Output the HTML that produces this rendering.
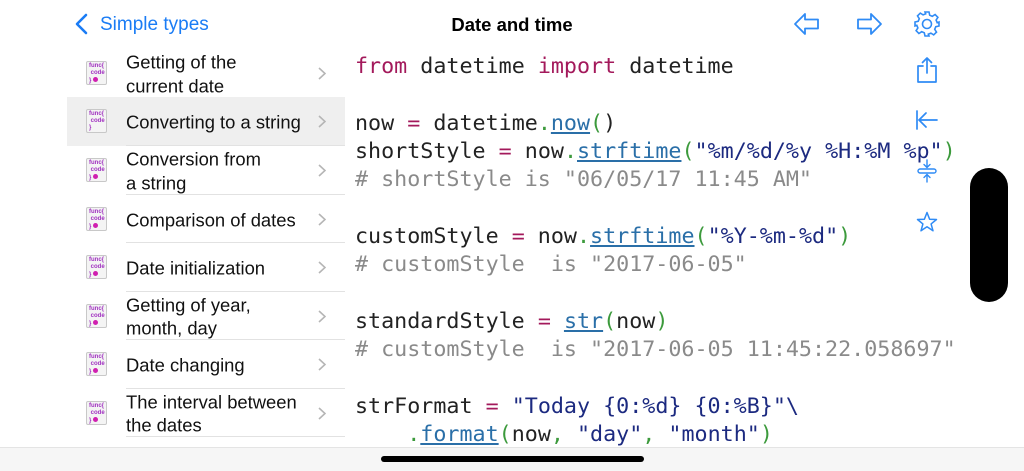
<!DOCTYPE html>
<html><head><meta charset="utf-8"><style>
*{margin:0;padding:0;box-sizing:border-box}
body{width:1024px;height:471px;overflow:hidden;background:#fff;position:relative;font-family:"Liberation Sans",sans-serif}
.abs{position:absolute}
.back{left:100px;top:14px;font-size:19px;color:#1a7cf5}
.title{left:0;width:1024px;top:14px;text-align:center;font-size:18.5px;font-weight:bold;color:#000}
.row{position:absolute;left:67px;width:278px;height:48.5px}
.row.sel{background:#efefef}
.row .t{position:absolute;left:59px;top:50%;transform:translateY(-50%);margin-top:1px;font-size:18.4px;line-height:23.5px;color:#111}
.row .sep{position:absolute;left:59px;right:0;bottom:0;height:1px;background:#e2e2e2}
.row .ch{position:absolute;left:251px;top:50%;margin-top:-6px}
.ic{position:absolute;left:19px;top:50%;margin-top:-12px;width:21px;height:24px;border:1px solid #c8c8c8;border-radius:2px;background:#f4f4f4;font-family:"Liberation Sans",sans-serif;font-size:6px;line-height:7px;color:#a030c0;padding:1px 0 0 2px;font-weight:bold}
.ic i{display:inline-block;width:5px;height:5px;border-radius:50%;background:#d020b0;margin-left:2px}
pre{position:absolute;left:355px;top:53px;font-family:"DejaVu Sans Mono",monospace;font-size:21.7px;line-height:28.3px;color:#222}
.k{color:#a3195b}.f{color:#2a6fa8;text-decoration:underline}.g{color:#3c9a3c}.s{color:#1c2a80}.c{color:#8a8a8a}
</style></head><body>
<svg class="abs" style="left:74px;top:13px" width="16" height="22"><path d="M12 2 L3 11 L12 20" fill="none" stroke="#1a7cf5" stroke-width="2.6" stroke-linecap="round" stroke-linejoin="round"/></svg>
<div class="abs back">Simple types</div>
<div class="abs title">Date and time</div>
<svg class="abs" style="left:793px;top:11px" width="28" height="26"><path d="M2 13 L12 3 V8.5 H25 V17.5 H12 V23 Z" fill="none" stroke="#2f8bf5" stroke-width="1.8" stroke-linejoin="round"/></svg>
<svg class="abs" style="left:855px;top:11px" width="28" height="26"><path d="M26 13 L16 3 V8.5 H3 V17.5 H16 V23 Z" fill="none" stroke="#2f8bf5" stroke-width="1.8" stroke-linejoin="round"/></svg>
<svg class="abs" style="left:913px;top:10px" width="28" height="28" viewBox="0 0 28 28"><g fill="none" stroke="#2f8bf5" stroke-width="1.6"><circle cx="14" cy="14" r="4.5"/><path d="M12 2h4l.7 3.2 2.6 1.1 2.8-1.8 2.8 2.8-1.8 2.8 1.1 2.6L26 12v4l-3.2.7-1.1 2.6 1.8 2.8-2.8 2.8-2.8-1.8-2.6 1.1L16 26h-4l-.7-3.2-2.6-1.1-2.8 1.8-2.8-2.8 1.8-2.8-1.1-2.6L2 16v-4l3.2-.7 1.1-2.6-1.8-2.8 2.8-2.8 2.8 1.8 2.6-1.1z"/></g></svg>
<svg class="abs" style="left:914px;top:56px" width="26" height="28"><g fill="none" stroke="#2f8bf5" stroke-width="1.7" stroke-linecap="round" stroke-linejoin="round"><path d="M9 10H4V26H22V10H17"/><path d="M13 17V2M8.5 6.5L13 2l4.5 4.5"/></g></svg>
<svg class="abs" style="left:914px;top:108px" width="26" height="24"><g fill="none" stroke="#2f8bf5" stroke-width="1.7" stroke-linecap="round"><path d="M3 3V21M5 12H23M12 5L5 12L12 19"/></g></svg>
<svg class="abs" style="left:915px;top:158px" width="26" height="26"><g fill="none" stroke="#2f8bf5" stroke-width="1.4" stroke-linecap="round"><path d="M12 2V9M9 6.5L12 9.5L15 6.5M12 24V17M9 19.5L12 16.5L15 19.5"/><rect x="3" y="11" width="18" height="4" rx="2"/></g></svg>
<svg class="abs" style="left:915px;top:210px" width="24" height="24"><path d="M12 2.5L14.6 9.2L21.5 9.5L16.1 13.9L18 20.8L12 16.8L6 20.8L7.9 13.9L2.5 9.5L9.4 9.2Z" fill="none" stroke="#2f8bf5" stroke-width="1.5" stroke-linejoin="round"/></svg>

<div class="row" style="top:49px"><div class="ic">func{<br>&nbsp;code<br>}<i></i></div><div class="t">Getting of the<br>current date</div><svg class="ch" width="8" height="13"><path d="M1 1L7 6.5L1 12" fill="none" stroke="#b5b5b5" stroke-width="1.6"/></svg></div>
<div class="row sel" style="top:97px"><div class="ic">func{<br>&nbsp;code<br>}</div><div class="t">Converting to a string</div><svg class="ch" width="8" height="13"><path d="M1 1L7 6.5L1 12" fill="none" stroke="#b5b5b5" stroke-width="1.6"/></svg></div>
<div class="row" style="top:146px"><div class="ic">func{<br>&nbsp;code<br>}<i></i></div><div class="t">Conversion from<br>a string</div><div class="sep"></div><svg class="ch" width="8" height="13"><path d="M1 1L7 6.5L1 12" fill="none" stroke="#b5b5b5" stroke-width="1.6"/></svg></div>
<div class="row" style="top:194.5px"><div class="ic">func{<br>&nbsp;code<br>}<i></i></div><div class="t">Comparison of dates</div><div class="sep"></div><svg class="ch" width="8" height="13"><path d="M1 1L7 6.5L1 12" fill="none" stroke="#b5b5b5" stroke-width="1.6"/></svg></div>
<div class="row" style="top:243px"><div class="ic">func{<br>&nbsp;code<br>}<i></i></div><div class="t">Date initialization</div><div class="sep"></div><svg class="ch" width="8" height="13"><path d="M1 1L7 6.5L1 12" fill="none" stroke="#b5b5b5" stroke-width="1.6"/></svg></div>
<div class="row" style="top:291.5px"><div class="ic">func{<br>&nbsp;code<br>}<i></i></div><div class="t">Getting of year,<br>month, day</div><div class="sep"></div><svg class="ch" width="8" height="13"><path d="M1 1L7 6.5L1 12" fill="none" stroke="#b5b5b5" stroke-width="1.6"/></svg></div>
<div class="row" style="top:340px"><div class="ic">func{<br>&nbsp;code<br>}<i></i></div><div class="t">Date changing</div><div class="sep"></div><svg class="ch" width="8" height="13"><path d="M1 1L7 6.5L1 12" fill="none" stroke="#b5b5b5" stroke-width="1.6"/></svg></div>
<div class="row" style="top:388.5px"><div class="ic">func{<br>&nbsp;code<br>}<i></i></div><div class="t">The interval between<br>the dates</div><div class="sep"></div><svg class="ch" width="8" height="13"><path d="M1 1L7 6.5L1 12" fill="none" stroke="#b5b5b5" stroke-width="1.6"/></svg></div>
<div class="abs" style="left:126px;top:145px;width:219px;height:1px;background:#e2e2e2"></div>

<pre><span class="k">from</span> datetime <span class="k">import</span> datetime

now <span class="k">=</span> datetime<span class="g">.</span><span class="f">now</span><span class="g">(</span>)
shortStyle <span class="k">=</span> now<span class="g">.</span><span class="f">strftime</span><span class="g">(</span><span class="s">"%m/%d/%y %H:%M %p"</span><span class="g">)</span>
<span class="c"># shortStyle is "06/05/17 11:45 AM"</span>

customStyle <span class="k">=</span> now<span class="g">.</span><span class="f">strftime</span><span class="g">(</span><span class="s">"%Y-%m-%d"</span><span class="g">)</span>
<span class="c"># customStyle  is "2017-06-05"</span>

standardStyle <span class="k">=</span> <span class="f">str</span><span class="g">(</span>now<span class="g">)</span>
<span class="c"># customStyle  is "2017-06-05 11:45:22.058697"</span>

strFormat <span class="k">=</span> <span class="s">"Today {0:%d} {0:%B}"\</span>
    <span class="g">.</span><span class="f">format</span><span class="g">(</span>now<span class="g">,</span> <span class="s">"day"</span><span class="g">,</span> <span class="s">"month"</span><span class="g">)</span></pre>

<div class="abs" style="left:0;top:447px;width:1024px;height:24px;background:#f6f6f6;border-top:1px solid #e4e4e4"></div>
<div class="abs" style="left:381px;top:456px;width:263px;height:6px;border-radius:3px;background:#000"></div>
<div class="abs" style="left:970px;top:168px;width:38px;height:134px;border-radius:19px;background:#000"></div>
</body></html>
